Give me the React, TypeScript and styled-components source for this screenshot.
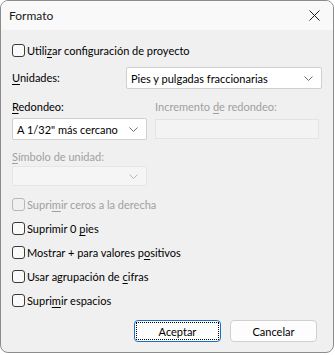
import React from 'react';
import styled, { createGlobalStyle } from 'styled-components';

const GlobalStyle = createGlobalStyle`
    html, body {
        margin: 0;
        padding: 0;
        background: #ffffff;
    }
    body {
        font-family: Lato, 'Open Sans', sans-serif;
        font-size: 11px;
        color: #000000;
    }
`;

const Window = styled.div`
    width: 334px;
    height: 353px;
    box-sizing: border-box;
    border: 1px solid #8c8c8c;
    border-radius: 8px;
    background: #f0f0f0;
    overflow: hidden;
    display: flex;
    flex-direction: column;
`;

const TitleBar = styled.div`
    height: 29px;
    background: #f9f9f9;
    display: flex;
    align-items: center;
    justify-content: space-between;
    padding: 0 13px 0 8px;
    font-size: 12px;
    color: #1a1a1a;
`;

const Body = styled.div`
    flex: 1;
    display: flex;
    flex-direction: column;
    padding: 12px 11px 0 11px;
`;

const CheckRow = styled.label<{ $disabled?: boolean; $gap?: number }>`
    display: flex;
    align-items: center;
    gap: 2px;
    height: 16px;
    margin-bottom: ${(p) => p.$gap ?? 8}px;
    color: ${(p) => (p.$disabled ? '#a0a0a0' : '#000000')};
`;

const Box = styled.span<{ $disabled?: boolean }>`
    width: 13px;
    height: 13px;
    box-sizing: border-box;
    border: 1px solid ${(p) => (p.$disabled ? '#b8b8b8' : '#3a3a3a')};
    border-radius: 3px;
    background: ${(p) => (p.$disabled ? '#f0f0f0' : '#f9f9f9')};
    flex-shrink: 0;
`;

const Key = styled.span`
    text-decoration: underline;
    text-underline-offset: 2px;
`;

const UnitsRow = styled.div`
    display: flex;
    align-items: center;
    justify-content: space-between;
    margin-top: 9px;
`;

const Label = styled.div<{ $disabled?: boolean }>`
    color: ${(p) => (p.$disabled ? '#a0a0a0' : '#000000')};
    line-height: 16px;
`;

const Combo = styled.div<{ $width: number; $disabled?: boolean }>`
    width: ${(p) => p.$width}px;
    height: ${(p) => (p.$disabled ? 20 : 22)}px;
    box-sizing: border-box;
    border: 1px solid ${(p) => (p.$disabled ? '#e6e6e6' : '#cfcfcf')};
    border-radius: 2px;
    background: ${(p) => (p.$disabled ? '#f5f5f5' : '#ffffff')};
    display: flex;
    align-items: center;
    justify-content: space-between;
    padding: 0 8px 0 4px;
`;

const TwoCols = styled.div`
    display: grid;
    grid-template-columns: 135px 1fr;
    column-gap: 8px;
    row-gap: 3px;
    margin-top: 10px;
    margin-bottom: 9px;
`;

const Field = styled.div`
    height: 20px;
    margin-top: 1px;
    box-sizing: border-box;
    border: 1px solid #e3e3e3;
    background: #f3f3f3;
    width: 164px;
`;

const SymbolBlock = styled.div`
    display: flex;
    flex-direction: column;
    gap: 1px;
    margin-bottom: 10px;
`;

const Buttons = styled.div`
    display: flex;
    justify-content: flex-end;
    gap: 9px;
    padding-right: 5px;
    margin-top: 4px;
`;

const Button = styled.div<{ $primary?: boolean }>`
    width: 87px;
    height: 22px;
    box-sizing: border-box;
    border: 1px solid ${(p) => (p.$primary ? '#1a6fc4' : '#d0d0d0')};
    border-radius: 4px;
    background: #fdfdfd;
    display: flex;
    align-items: center;
    justify-content: center;
    padding: 1px;
`;

const Focus = styled.div`
    flex: 1;
    align-self: stretch;
    border: 1px dotted #000000;
    display: flex;
    align-items: center;
    justify-content: center;
`;

const Chevron = ({ color = '#6e6e6e' }: { color?: string }) => (
    <svg width="9" height="5" viewBox="0 0 9 5">
        <path d="M0.5 0.5 L4.5 4.5 L8.5 0.5" fill="none" stroke={color} strokeWidth="1" />
    </svg>
);

const Close = () => (
    <svg width="11" height="11" viewBox="0 0 11 11">
        <path d="M0.5 0.5 L10.5 10.5 M10.5 0.5 L0.5 10.5" stroke="#1a1a1a" strokeWidth="1" />
    </svg>
);

const Check = ({ children, disabled, gap }: { children: React.ReactNode; disabled?: boolean; gap?: number }) => (
    <CheckRow $disabled={disabled} $gap={gap}>
        <Box $disabled={disabled} />
        <span>{children}</span>
    </CheckRow>
);

const App: React.FC = () => {
    return (
        <>
            <GlobalStyle />
            <Window>
                <TitleBar>
                    <span>Formato</span>
                    <Close />
                </TitleBar>
                <Body>
                    <Check gap={0}>
                        Utili<Key>z</Key>ar configuración de proyecto
                    </Check>
                    <UnitsRow>
                        <Label>
                            <Key>U</Key>nidades:
                        </Label>
                        <Combo $width={196}>
                            <span>Pies y pulgadas fraccionarias</span>
                            <Chevron />
                        </Combo>
                    </UnitsRow>
                    <TwoCols>
                        <Label>
                            <Key>R</Key>edondeo:
                        </Label>
                        <Label $disabled>
                            Incremento <Key>d</Key>e redondeo:
                        </Label>
                        <Combo $width={135}>
                            <span>A 1/32" más cercano</span>
                            <Chevron />
                        </Combo>
                        <Field />
                    </TwoCols>
                    <SymbolBlock>
                        <Label $disabled>
                            <Key>S</Key>ímbolo de unidad:
                        </Label>
                        <Combo $width={135} $disabled>
                            <span />
                            <Chevron color="#b5b5b5" />
                        </Combo>
                    </SymbolBlock>
                    <Check disabled>
                        Supri<Key>m</Key>ir ceros a la derecha
                    </Check>
                    <Check>
                        Suprimir 0 <Key>p</Key>ies
                    </Check>
                    <Check>
                        Mostrar + para valores p<Key>o</Key>sitivos
                    </Check>
                    <Check>
                        Usar agrupación de <Key>c</Key>ifras
                    </Check>
                    <Check>
                        Supri<Key>m</Key>ir espacios
                    </Check>
                    <Buttons>
                        <Button $primary>
                            <Focus>Aceptar</Focus>
                        </Button>
                        <Button>Cancelar</Button>
                    </Buttons>
                </Body>
            </Window>
        </>
    );
};

export default App;
